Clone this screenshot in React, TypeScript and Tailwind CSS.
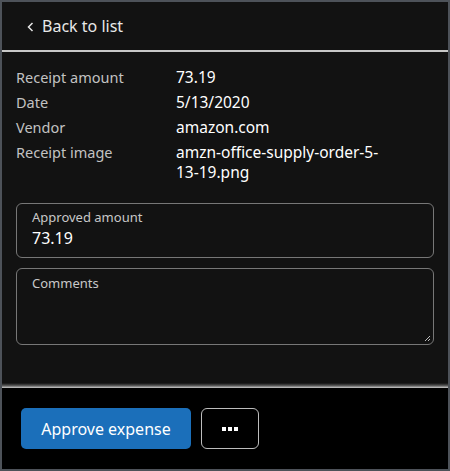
import React from "react";

export default function App() {
  const rows: [string, string][] = [
    ["Receipt amount", "73.19"],
    ["Date", "5/13/2020"],
    ["Vendor", "amazon.com"],
    ["Receipt image", "amzn-office-supply-order-5-13-19.png"],
  ];
  return (
    <div
      className="w-[450px] h-[471px] border-2 border-[#4d5259] bg-[#121212] flex flex-col overflow-hidden"
      style={{ fontFamily: '"Noto Sans", "Open Sans", sans-serif' }}
    >
      <div className="h-[50px] flex items-center pl-[24px] border-b-2 border-[#c8c8c8] shrink-0">
        <svg width="10" height="12" viewBox="0 0 10 12" className="mr-[6px] mt-[1px]">
          <path d="M6.5 2 L2.5 6 L6.5 10" fill="none" stroke="#e6e6e6" strokeWidth="1.5" />
        </svg>
        <span className="text-[16px] text-[#e8e8e8]">Back to list</span>
      </div>
      <div className="flex-1 px-[14px] pt-[13px]">
        <div className="flex flex-col">
          {rows.map(([k, v]) => (
            <div key={k} className="flex text-[14.5px] leading-[25px]">
              <div className="w-[160px] text-[#c2c2c2] shrink-0">{k}</div>
              <div className="text-white text-[15.5px] w-[215px] leading-[20px] pt-[2px] pb-[3px] break-words">{v}</div>
            </div>
          ))}
        </div>
        <div className="mt-[18px] h-[55px] rounded-[6px] border border-[#777] pl-[15px] pt-[4px]">
          <div className="text-[13px] text-[#c8c8c8] leading-[18px]">Approved amount</div>
          <div className="text-[16px] text-white leading-[24px]">73.19</div>
        </div>
        <div className="mt-[10px] h-[77px] rounded-[6px] border border-[#777] pl-[15px] pt-[5px] relative">
          <div className="text-[13px] text-[#c8c8c8] leading-[18px]">Comments</div>
          <svg width="8" height="8" viewBox="0 0 8 8" className="absolute right-[2px] bottom-[2px]">
            <path d="M7 2 L2 7 M7 5 L5 7" stroke="#bbb" strokeWidth="1" />
          </svg>
        </div>
      </div>
      <div className="h-[5px] bg-gradient-to-b from-[#121212] via-[#555] to-[#cfcfcf] shrink-0" />
      <div className="h-[81px] bg-black flex items-center pl-[19px] gap-[10px] shrink-0">
        <button className="w-[170px] h-[41px] rounded-[5px] bg-[#1b6fba] text-white text-[16px]">
          Approve expense
        </button>
        <button className="w-[58px] h-[41px] rounded-[6px] border border-[#bdbdbd] flex items-center justify-center gap-[2px]">
          <span className="w-[4px] h-[4px] bg-white" />
          <span className="w-[4px] h-[4px] bg-white" />
          <span className="w-[4px] h-[4px] bg-white" />
        </button>
      </div>
    </div>
  );
}
